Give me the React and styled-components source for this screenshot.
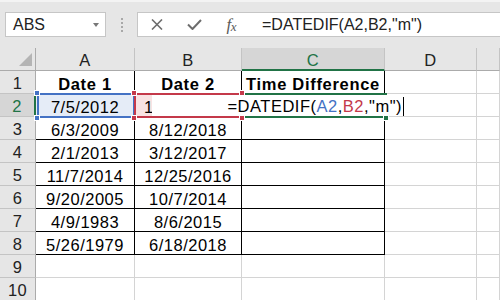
import styled, { createGlobalStyle } from 'styled-components';

const GlobalStyle = createGlobalStyle`
  body {
    margin: 0;
    background: #fff;
    font-family: "Liberation Sans", Arial, sans-serif;
  }
`;

const GREEN = '#217346';
const BLUE = '#4472c4';
const RED = '#c4394a';

const columns = ['A', 'B', 'C', 'D', ''];

const rows = [
  ['Date 1', 'Date 2', 'Time Difference'],
  ['7/5/2012', '1', ''],
  ['6/3/2009', '8/12/2018', ''],
  ['2/1/2013', '3/12/2017', ''],
  ['11/7/2014', '12/25/2016', ''],
  ['9/20/2005', '10/7/2014', ''],
  ['4/9/1983', '8/6/2015', ''],
  ['5/26/1979', '6/18/2018', ''],
  ['', '', ''],
  ['', '', ''],
];

const App = () => {
  return (
    <>
      <GlobalStyle />
      <Page>
        <Toolbar>
          <NameBox>
            <span>ABS</span>
            <Caret />
          </NameBox>
          <Grip>
            <i /><i /><i /><i />
          </Grip>
          <FormulaBar>
            <Buttons>
              <svg width="12" height="11" viewBox="0 0 12 11">
                <path d="M1 0.5 L11 10.5 M11 0.5 L1 10.5" stroke="#6d6d6d" strokeWidth="1.6" fill="none" />
              </svg>
              <svg width="15" height="11" viewBox="0 0 15 11">
                <path d="M1 5.5 L5.5 10 L14 1" stroke="#6d6d6d" strokeWidth="2" fill="none" />
              </svg>
              <Fx>f<small>x</small></Fx>
            </Buttons>
            <FormulaText>=DATEDIF(A2,B2,"m")</FormulaText>
          </FormulaBar>
        </Toolbar>

        <Sheet>
          <Corner />
          {columns.map((c, i) => (
            <ColHead key={i} $active={c === 'C'}>{c}</ColHead>
          ))}
          {rows.map((r, ri) => (
            <Row key={ri}>
              <RowHead $active={ri === 1}>{ri + 1}</RowHead>
              {r.map((v, ci) => (
                <Cell
                  key={ci}
                  $boxed={ri < 8}
                  $bold={ri === 0}
                  $fill={ri === 1 ? (ci === 0 ? '#e5ecf7' : ci === 1 ? '#f8e3e3' : '#fff') : '#fff'}
                  $align={ri === 1 && ci === 1 ? 'flex-start' : 'center'}
                >
                  {v}
                </Cell>
              ))}
              <Cell />
              <Cell />
            </Row>
          ))}

          <RangeBox $color={BLUE} $x={37} $y={45} $w={98} $h={25} />
          <RangeBox $color={RED} $x={134} $y={45} $w={109} $h={25} />
          <RangeBox $color={GREEN} $x={242} $y={45} $w={145} $h={25} />

          <Editor>
            =DATEDIF(<Ref $color={BLUE}>A2</Ref>,<Ref $color={RED}>B2</Ref>,"m")
            <Cursor />
          </Editor>

          <Handle $color={BLUE} $x={37} $y={45} />
          <Handle $color={BLUE} $x={37} $y={70} />
          <Handle $color={RED} $x={134} $y={45} />
          <Handle $color={RED} $x={134} $y={70} />
          <Handle $color={RED} $x={242} $y={45} />
          <Handle $color={RED} $x={242} $y={70} />
          <Handle $color={GREEN} $x={386} $y={70} />
        </Sheet>
      </Page>
    </>
  );
};

export default App;

const Page = styled.div`
  width: 500px;
  height: 300px;
  overflow: hidden;
  background: #fff;
`;

const Toolbar = styled.div`
  height: 48px;
  box-sizing: border-box;
  background: #e6e6e6;
  border-top: 2px solid #f3f3f3;
  display: flex;
  align-items: flex-start;
  padding: 10px 0 0 5px;
`;

const NameBox = styled.div`
  width: 101px;
  height: 25px;
  box-sizing: border-box;
  background: #fff;
  border: 1px solid #c6c6c6;
  display: flex;
  align-items: center;
  justify-content: space-between;
  padding: 0 6px 0 7px;
  font-size: 16px;
  color: #222;
`;

const Caret = styled.div`
  width: 0;
  height: 0;
  border-left: 3.5px solid transparent;
  border-right: 3.5px solid transparent;
  border-top: 4px solid #777;
`;

const Grip = styled.div`
  width: 31px;
  height: 25px;
  display: flex;
  flex-direction: column;
  align-items: center;
  justify-content: center;
  gap: 2px;

  i {
    width: 2px;
    height: 2px;
    background: #a8a8a8;
  }
`;

const FormulaBar = styled.div`
  flex: 1;
  height: 25px;
  box-sizing: border-box;
  background: #fff;
  border: 1px solid #c6c6c6;
  border-right: none;
  display: flex;
  align-items: center;
`;

const Buttons = styled.div`
  width: 113px;
  display: flex;
  align-items: center;
  justify-content: space-between;
  padding: 0 15px 0 13px;
  box-sizing: border-box;
`;

const Fx = styled.span`
  font-family: "Liberation Serif", serif;
  font-style: italic;
  font-size: 17px;
  color: #5a5a5a;
  letter-spacing: -0.5px;

  small {
    font-size: 13px;
    position: relative;
    top: 1px;
  }
`;

const FormulaText = styled.div`
  padding-left: 11px;
  font-size: 16px;
  color: #222;
`;

const Sheet = styled.div`
  position: relative;
  display: grid;
  grid-template-columns: 36px 99px 107px 143px 92px 1fr;
  grid-auto-rows: 23px;
`;

const Row = styled.div`
  display: contents;
`;

const Corner = styled.div`
  background: #e6e6e6;
  border-right: 1px solid #ababab;
  border-bottom: 1px solid #ababab;
  position: relative;

  &::after {
    content: "";
    position: absolute;
    right: 3px;
    bottom: 4px;
    border-left: 13px solid transparent;
    border-bottom: 13px solid #b4b4b4;
  }
`;

const ColHead = styled.div`
  background: ${p => (p.$active ? '#d6d6d6' : '#e6e6e6')};
  color: ${p => (p.$active ? GREEN : '#222')};
  border-right: 1px solid #c4c4c4;
  border-bottom: ${p => (p.$active ? `2px solid ${GREEN}` : '1px solid #ababab')};
  display: flex;
  justify-content: center;
  align-items: center;
  padding-top: 3px;
  box-sizing: border-box;
  font-size: 16.5px;
  letter-spacing: 0.4px;
`;

const RowHead = styled.div`
  background: ${p => (p.$active ? '#d6d6d6' : '#e6e6e6')};
  color: ${p => (p.$active ? GREEN : '#222')};
  border-right: ${p => (p.$active ? `2px solid ${GREEN}` : '1px solid #ababab')};
  border-bottom: 1px solid #c4c4c4;
  display: flex;
  justify-content: center;
  align-items: center;
  padding-top: 3px;
  box-sizing: border-box;
  font-size: 16.5px;
  letter-spacing: 0.4px;
`;

const Cell = styled.div`
  background: ${p => p.$fill || '#fff'};
  border-right: 1px solid ${p => (p.$boxed ? '#000' : '#d4d4d4')};
  border-bottom: 1px solid ${p => (p.$boxed ? '#000' : '#d4d4d4')};
  display: flex;
  justify-content: ${p => p.$align || 'center'};
  align-items: center;
  padding: 4px 0 0 ${p => (p.$align === 'flex-start' ? '9px' : '0')};
  box-sizing: border-box;
  font-size: 16.5px;
  font-weight: ${p => (p.$bold ? 700 : 400)};
  letter-spacing: ${p => (p.$bold ? '0.7px' : '0.5px')};
  white-space: nowrap;
  color: #000;
`;

const RangeBox = styled.div`
  position: absolute;
  left: ${p => p.$x}px;
  top: ${p => p.$y}px;
  width: ${p => p.$w}px;
  height: ${p => p.$h}px;
  box-sizing: border-box;
  border: 2px solid ${p => p.$color};
  pointer-events: none;
`;

const Handle = styled.div`
  position: absolute;
  left: ${p => p.$x - 3}px;
  top: ${p => p.$y - 3}px;
  width: 6px;
  height: 6px;
  box-sizing: border-box;
  background: ${p => p.$color};
  border: 1px solid #fff;
`;

const Editor = styled.div`
  position: absolute;
  left: 152px;
  top: 47px;
  width: 256px;
  height: 21px;
  background: #fff;
  display: flex;
  justify-content: flex-end;
  align-items: center;
  padding: 2px 4px 0 0;
  box-sizing: border-box;
  font-size: 16.5px;
  letter-spacing: 0.5px;
  white-space: nowrap;
  color: #000;
`;

const Ref = styled.span`
  color: ${p => p.$color};
`;

const Cursor = styled.span`
  display: inline-block;
  width: 1px;
  height: 19px;
  margin-left: 1px;
  background: #000;
`;
